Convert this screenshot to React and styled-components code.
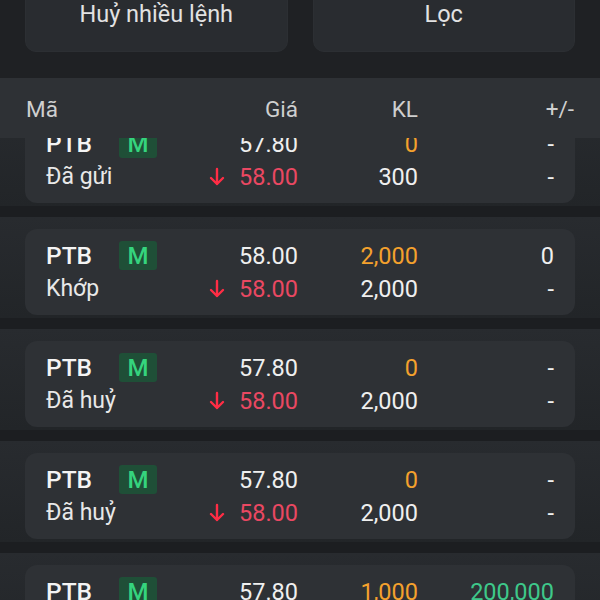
import React from "react";
import styled, { createGlobalStyle } from "styled-components";

const Global = createGlobalStyle`
  html, body { margin: 0; padding: 0; background: #1f2124; }
  body { font-family: Roboto, "Noto Sans", "Liberation Sans", sans-serif; overflow: hidden; }
`;

const Screen = styled.div`
  width: 600px;
  height: 600px;
  overflow: hidden;
  background: #1f2124;
  display: flex;
  flex-direction: column;
  & > * { flex-shrink: 0; }
`;

const Toolbar = styled.div`
  display: grid;
  grid-template-columns: 1fr 1fr;
  align-items: start;
  gap: 25px;
  padding: 0 25px;
  margin-top: -22px;
  height: 100px;
  box-sizing: border-box;
`;

const ActionButton = styled.button`
  height: 74px;
  border: 1px solid #2c2f33;
  border-radius: 11px;
  background: #292c30;
  color: #e2e2e2;
  font-family: inherit;
  font-size: 23.5px;
  padding: 0;
  display: flex;
  align-items: center;
  justify-content: center;
  line-height: 1;
`;

const Header = styled.div`
  position: relative;
  z-index: 2;
  height: 60px;
  background: #2e3135;
  display: grid;
  grid-template-columns: 120px 152px 120px 156px;
  align-items: center;
  padding: 0 26px;
  color: #cfcfcf;
  font-size: 22.5px;
`;

const HeadCell = styled.div`
  text-align: ${(p) => (p.$left ? "left" : "right")};
  padding-top: 1px;
`;

const List = styled.div`
  margin-top: -33px;
  display: flex;
  flex-direction: column;
`;

const Item = styled.div`
  background: linear-gradient(#282b2f, #222528);
  padding: 12px 25px 3px;
  border-bottom: 11px solid #1c1e21;
`;

const Card = styled.div`
  height: 86px;
  box-sizing: border-box;
  background: #2e3135;
  border-radius: 12px;
  padding: 10px 21px;
  display: grid;
  grid-template-columns: 120px 132px 120px 136px;
  grid-auto-rows: 33px;
  align-items: center;
  font-size: 23.5px;
  color: #efefef;
`;

const NameCell = styled.div`
  display: flex;
  align-items: center;
`;

const Symbol = styled.span`
  font-weight: 500;
  font-size: 24.5px;
  width: 73px;
  color: #f4f4f4;
`;

const Badge = styled.span`
  width: 38px;
  height: 29px;
  border-radius: 3px;
  background: #1f4f37;
  color: #35d47e;
  font-weight: 500;
  font-size: 24px;
  display: flex;
  align-items: center;
  justify-content: center;
`;

const Status = styled.div`
  color: #e8e8e8;
  font-size: 23px;
`;

const Num = styled.div`
  color: ${(p) => p.$color || "#efefef"};
  display: flex;
  justify-content: flex-end;
  align-items: center;
  gap: 14px;
`;

const COLORS = {
  white: "#efefef",
  orange: "#f4a12d",
  red: "#ea4862",
  green: "#3ec88a",
};

const DownArrow = () => (
  <svg width="16" height="20" viewBox="0 0 16 20" fill="none">
    <path d="M8 2v15M2 11l6 6 6-6" stroke="#ff2d45" strokeWidth="2.4" strokeLinecap="round" strokeLinejoin="round" />
  </svg>
);

const orders = [
  { price: "57.80", qty: "0", chg: "-", status: "Đã gửi", filled: "300" },
  { price: "58.00", qty: "2,000", chg: "0", status: "Khớp", filled: "2,000" },
  { price: "57.80", qty: "0", chg: "-", status: "Đã huỷ", filled: "2,000" },
  { price: "57.80", qty: "0", chg: "-", status: "Đã huỷ", filled: "2,000" },
  { price: "57.80", qty: "1,000", chg: "200,000", chgColor: "green", status: "Đã huỷ", filled: "2,000" },
];

export default function App() {
  return (
    <>
      <Global />
      <Screen>
        <Toolbar>
          <ActionButton>Huỷ nhiều lệnh</ActionButton>
          <ActionButton>Lọc</ActionButton>
        </Toolbar>
        <Header>
          <HeadCell $left>Mã</HeadCell>
          <HeadCell>Giá</HeadCell>
          <HeadCell>KL</HeadCell>
          <HeadCell>+/-</HeadCell>
        </Header>
        <List>
          {orders.map((o, i) => (
            <Item key={i}>
              <Card>
                <NameCell>
                  <Symbol>PTB</Symbol>
                  <Badge>M</Badge>
                </NameCell>
                <Num>{o.price}</Num>
                <Num $color={COLORS.orange}>{o.qty}</Num>
                <Num $color={COLORS[o.chgColor || "white"]}>{o.chg}</Num>
                <Status>{o.status}</Status>
                <Num $color={COLORS.red}>
                  <DownArrow />
                  {"58.00"}
                </Num>
                <Num>{o.filled}</Num>
                <Num>-</Num>
              </Card>
            </Item>
          ))}
        </List>
      </Screen>
    </>
  );
}
